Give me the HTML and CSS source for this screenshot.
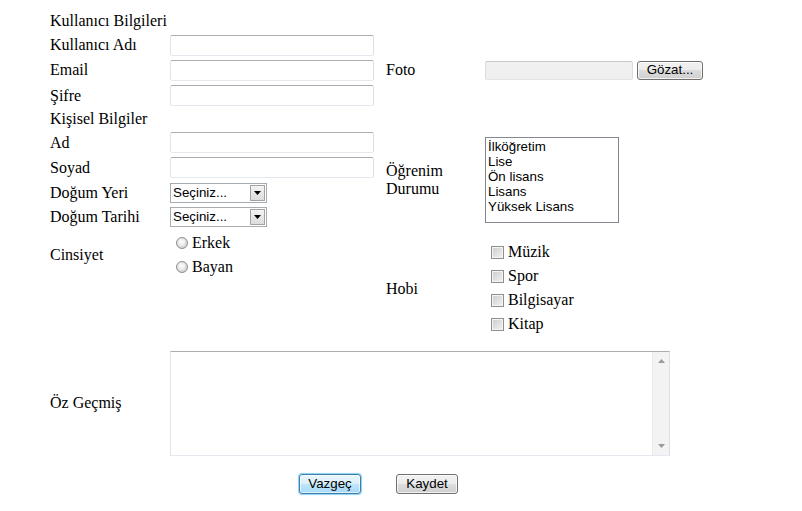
FILE: index.html
```html
<!DOCTYPE html>
<html lang="tr">
<head>
<meta charset="utf-8">
<title>Üye Formu</title>
<link rel="stylesheet" href="styles.css">
</head>
<body>
<form class="form">
  <div class="lbl r1 c12">Kullanıcı Bilgileri</div>

  <div class="lbl r2 c1">Kullanıcı Adı</div>
  <input class="txt r2 c2" type="text">

  <div class="lbl r3 c1">Email</div>
  <input class="txt r3 c2" type="text">
  <div class="lbl r3 c3">Foto</div>
  <div class="file r3 c4"><span class="file-box"></span><button type="button" class="btn file-btn">Gözat...</button></div>

  <div class="lbl r4 c1">Şifre</div>
  <input class="txt r4 c2" type="password">

  <div class="lbl r5 c12">Kişisel Bilgiler</div>

  <div class="lbl r6 c1">Ad</div>
  <input class="txt r6 c2" type="text">

  <div class="lbl r7 c1">Soyad</div>
  <input class="txt r7 c2" type="text">

  <div class="lbl r8 c1">Doğum Yeri</div>
  <div class="sel r8 c2"><span class="sel-text">Seçiniz...</span><span class="sel-btn"><svg width="7" height="4" viewBox="0 0 7 4"><path d="M0 0h7L3.5 4z" fill="#000"/></svg></span></div>

  <div class="lbl r9 c1">Doğum Tarihi</div>
  <div class="sel r9 c2"><span class="sel-text">Seçiniz...</span><span class="sel-btn"><svg width="7" height="4" viewBox="0 0 7 4"><path d="M0 0h7L3.5 4z" fill="#000"/></svg></span></div>

  <div class="lbl lbl-wrap r69 c3">Öğrenim Durumu</div>
  <div class="list r69 c4">
    <div class="opt">İlköğretim</div>
    <div class="opt">Lise</div>
    <div class="opt">Ön lisans</div>
    <div class="opt">Lisans</div>
    <div class="opt">Yüksek Lisans</div>
  </div>

  <div class="lbl r10 c1">Cinsiyet</div>
  <div class="radios r10 c2">
    <label class="choice"><input type="radio" name="cins" class="radio">Erkek</label>
    <label class="choice"><input type="radio" name="cins" class="radio">Bayan</label>
  </div>

  <div class="lbl r1011 c3">Hobi</div>
  <div class="checks r1011 c4">
    <label class="choice"><input type="checkbox" class="check">Müzik</label>
    <label class="choice"><input type="checkbox" class="check">Spor</label>
    <label class="choice"><input type="checkbox" class="check">Bilgisayar</label>
    <label class="choice"><input type="checkbox" class="check">Kitap</label>
  </div>

  <div class="lbl r12 c1">Öz Geçmiş</div>
  <div class="area r12 c24">
    <textarea class="area-input"></textarea>
    <div class="scroll">
      <svg width="7" height="4" viewBox="0 0 7 4"><path d="M3.5 0L7 4H0z" fill="#9a9a9a"/></svg>
      <svg width="7" height="4" viewBox="0 0 7 4"><path d="M0 0h7L3.5 4z" fill="#9a9a9a"/></svg>
    </div>
  </div>

  <div class="actions r13 c24">
    <button type="button" class="btn btn-focus">Vazgeç</button>
    <button type="button" class="btn">Kaydet</button>
  </div>
</form>
</body>
</html>
```
FILE: styles.css
```css
html, body {
  margin: 0;
  padding: 0;
  background: #fff;
}

.form {
  display: grid;
  grid-template-columns: 120px 216px 99px 1fr;
  grid-template-rows: 24px 24px 26px 25px 22px 25px 25px 25px 24px 51px 68px 110px 51px;
  align-items: center;
  padding: 9px 0 0 50px;
  font: 16px "Liberation Serif", "Times New Roman", serif;
  color: #000;
}

.r1 { grid-row: 1; }
.r2 { grid-row: 2; }
.r3 { grid-row: 3; }
.r4 { grid-row: 4; }
.r5 { grid-row: 5; }
.r6 { grid-row: 6; }
.r7 { grid-row: 7; }
.r8 { grid-row: 8; }
.r9 { grid-row: 9; }
.r69 { grid-row: 6 / 10; }
.r10 { grid-row: 10; }
.r1011 { grid-row: 10 / 12; }
.r12 { grid-row: 12; }
.r13 { grid-row: 13; }

.c1 { grid-column: 1; }
.c12 { grid-column: 1 / 3; }
.c2 { grid-column: 2; }
.c3 { grid-column: 3; }
.c4 { grid-column: 4; }
.c24 { grid-column: 2 / 5; }

.lbl {
  line-height: 18px;
  white-space: nowrap;
}
.lbl-wrap {
  white-space: normal;
}

.txt {
  box-sizing: border-box;
  width: 204px;
  height: 21px;
  margin: 0;
  padding: 1px 2px;
  border: 1px solid;
  border-color: #abadb3 #dbdfe6 #e3e9ef #e2e3ea;
  border-radius: 2px;
  background: #fff;
  font: 13.33px "Liberation Sans", Arial, sans-serif;
  outline: none;
}

/* file input */
.file {
  display: flex;
  align-items: center;
  gap: 4px;
}
.file-box {
  box-sizing: border-box;
  width: 148px;
  height: 19px;
  border: 1px solid;
  border-color: #c9c9c9 #dcdcdc #e3e3e3 #dcdcdc;
  border-radius: 2px;
  background: #f0f0f0;
}

/* buttons */
.btn {
  box-sizing: border-box;
  height: 20px;
  margin: 0;
  padding: 0 6px;
  border: 1px solid #707070;
  border-radius: 3px;
  background: linear-gradient(#f2f2f2 0%, #ebebeb 50%, #dddddd 50%, #cfcfcf 100%);
  box-shadow: inset 0 0 0 1px rgba(255, 255, 255, 0.7);
  font: 13.33px "Liberation Sans", Arial, sans-serif;
  line-height: 16px;
  color: #000;
}
.file-btn {
  width: 66px;
  height: 19px;
}

/* selects */
.sel {
  box-sizing: border-box;
  width: 97px;
  height: 20px;
  display: flex;
  align-items: stretch;
  border: 1px solid #a5acb2;
  background: #fff;
  font: 13.33px "Liberation Sans", Arial, sans-serif;
}
.sel-text {
  flex: 1;
  padding-left: 2px;
  line-height: 18px;
}
.sel-btn {
  box-sizing: border-box;
  width: 15px;
  margin: 1px;
  border: 1px solid #a3a3a3;
  background: linear-gradient(#f4f4f4, #dcdcdc);
  display: flex;
  align-items: center;
  justify-content: center;
}

/* listbox */
.list {
  box-sizing: border-box;
  width: 134px;
  height: 86px;
  border: 1px solid #828790;
  padding: 1px 0 0 2px;
  background: #fff;
  font: 13.33px "Liberation Sans", Arial, sans-serif;
  line-height: 15px;
}

/* radios / checkboxes */
.radios {
  align-self: start;
  padding-top: 2px;
  padding-left: 6px;
  display: flex;
  flex-direction: column;
}
.checks {
  align-self: start;
  padding-top: 11px;
  padding-left: 6px;
  display: flex;
  flex-direction: column;
}
.choice {
  height: 24px;
  display: flex;
  align-items: center;
  gap: 4px;
  white-space: nowrap;
}
.radio {
  appearance: none;
  box-sizing: border-box;
  width: 12px;
  height: 12px;
  margin: 0;
  border: 1px solid #8e8f8f;
  border-radius: 50%;
  background: radial-gradient(circle at 45% 40%, #ffffff 0, #eeeeee 35%, #cfcfcf 75%, #bdbdbd 100%);
}
.check {
  appearance: none;
  box-sizing: border-box;
  width: 13px;
  height: 13px;
  margin: 0;
  border: 1px solid #8e8f8f;
  background: linear-gradient(135deg, #cbcbcb, #f4f4f4);
  box-shadow: inset 0 0 0 1px #f4f4f4;
}

/* textarea */
.area {
  box-sizing: border-box;
  width: 500px;
  height: 105px;
  display: flex;
  border: 1px solid;
  border-color: #abadb3 #dbdfe6 #e3e9ef #e2e3ea;
  background: #fff;
}
.area-input {
  flex: 1;
  margin: 0;
  padding: 2px;
  border: 0;
  resize: none;
  outline: none;
  font: 13.33px "Liberation Sans", Arial, sans-serif;
}
.scroll {
  width: 16px;
  background: #f3f3f3;
  border-left: 1px solid #ececec;
  display: flex;
  flex-direction: column;
  justify-content: space-between;
  align-items: center;
  padding: 7px 0 7px;
}

/* actions */
.actions {
  display: flex;
  align-items: center;
  padding-left: 129px;
  gap: 35px;
}
.actions .btn {
  width: 62px;
}
.btn-focus {
  border-color: #3c7fb1;
  background: linear-gradient(#eaf6fd 0%, #d9f0fc 50%, #bee6fd 50%, #a7d9f5 100%);
  box-shadow: inset 0 0 0 1px rgba(255, 255, 255, 0.6), 0 0 1px 1px #8fd0f0;
}
```
